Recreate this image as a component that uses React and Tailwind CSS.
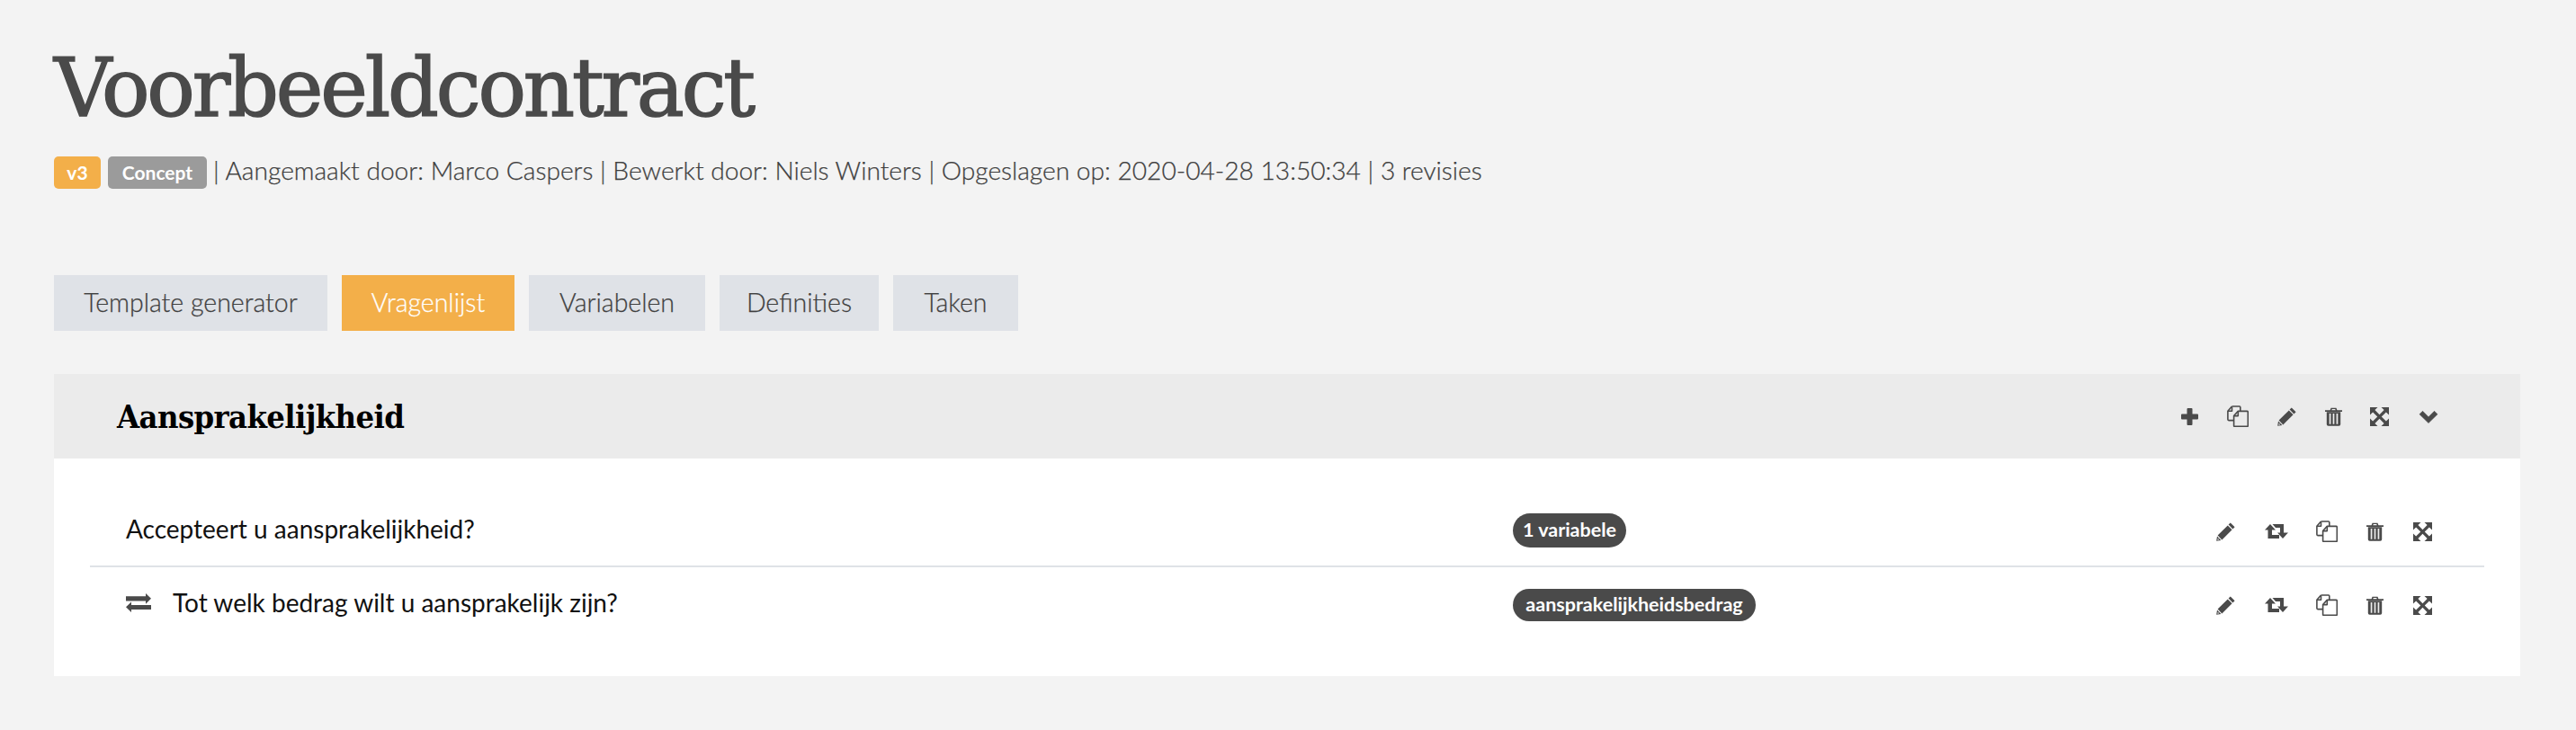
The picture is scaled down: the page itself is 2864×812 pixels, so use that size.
const sans = "font-['Lato','Noto_Sans',sans-serif]";
const slab = "font-['DejaVu_Serif','DejaVu_Serif_Condensed',serif]";
const slabBold = "font-['DejaVu_Serif_Condensed','DejaVu_Serif',serif]";

function I({ w = 24, h = 24, children, vb = "0 0 24 24" }) {
  return <svg width={w} height={h} viewBox={vb} className="block text-[#4a4a4a]">{children}</svg>;
}
const Plus = () => (
  <I w={19} h={19} vb="0 0 19 19">
    <path d="M6.500 1q0-1 1-1h4q1 0 1 1v5.500H18q1 0 1 1v4q0 1-1 1h-5.500V18q0 1-1 1h-4q-1 0-1-1v-5.500H1q-1 0-1-1v-4q0-1 1-1h5.500z" fill="currentColor" />
  </I>
);
const Copy = () => (
  <I>
    <g fill="none" stroke="currentColor" strokeWidth="1.6" strokeLinejoin="round">
      <path d="M5.500 1h8.300a1 1 0 0 1 1 1v4.200" />
      <path d="M5.500 1 .9 6.300v9.300a1 1 0 0 0 1 1h5.700" />
      <path d="M5.500 1.500v4.800H1" />
      <path d="M12.300 6.400h10a1 1 0 0 1 1 1v15a1 1 0 0 1-1 1H8.600a1 1 0 0 1-1-1V11.500z" />
      <path d="M12.300 6.700v4.900H7.900" />
    </g>
  </I>
);
const Pencil = () => (
  <I w={21} h={21} vb="0 0 21 21">
    <path d="M15.800 .4 20.600 5.200 18.400 7.400 13.600 2.600zM12.800 3.400 17.600 8.200 6.400 19.400 1.600 14.600z" fill="currentColor" />
    <path d="M1 15.600 5.400 20 .2 20.800z" fill="currentColor" />
    <path d="M1.800 17.800 3.200 19.200 1.400 19.700z" fill="#fff" />
  </I>
);
const Trash = () => (
  <I w={19} h={21} vb="0 0 19 21">
    <path d="M0 3.200h19v1.700H0zM5.500 3.400l1-2.700h6l1 2.700h-1.700l-.6-1.300H7.800l-.6 1.300z" fill="currentColor" />
    <path d="M1.800 5.200h15.400v13.800q0 1.800-1.800 1.800H3.600q-1.800 0-1.800-1.800z" fill="currentColor" />
    <path d="M4.700 7h1.700v11.800H4.700zM8.650 7h1.700v11.800h-1.700zM12.600 7h1.700v11.800h-1.700z" fill="#fff" fillOpacity=".9" />
  </I>
);
const Expand = () => (
  <I w={21} h={21} vb="0 0 21 21">
    <path d="M0 0H8.500L5.380 3.120 10.500 8.240 15.620 3.120 12.500 0H21V8.500L17.880 5.380 12.760 10.500 17.880 15.620 21 12.500V21H12.500L15.620 17.880 10.500 12.760 5.380 17.880 8.500 21H0V12.500L3.120 15.620 8.240 10.500 3.120 5.380 0 8.500Z" fill="currentColor" />
  </I>
);
const Chevron = () => (
  <I w={22} h={15} vb="0 0 22 15">
    <path d="M1 4.800 4.500 1.300 11 7.800l6.500-6.500L21 4.800 11 14.500z" fill="currentColor" stroke="currentColor" strokeWidth=".6" strokeLinejoin="round" />
  </I>
);
const Retweet = () => (
  <I w={26} h={16} vb="0 0 26 16">
    <path d="M6 0 12 6.500H8V12H16V16H3.500V6.500H0zM8.500 0H21V9.500H26L20 16 14 9.500H17V4H12z" fill="currentColor" />
  </I>
);
const Transfer = () => (
  <I w={28} h={21} vb="0 0 28 21">
    <path d="M0 3.300H22V0L28 5.800 22 11.700V8.600H0zM28 12.900H6V9.500L0 15.300 6 21V18H28z" fill="currentColor" />
  </I>
);

const IconBox = ({ className, children }) => (
  <span className={"flex items-center justify-center " + className}>{children}</span>
);

function Pill({ children, className }) {
  return (
    <span className={"inline-flex items-center justify-center rounded-full bg-[#4a4a4a] text-[21.500px] leading-none font-bold text-white " + className}>
      {children}
    </span>
  );
}

function RowIcons() {
  return (
    <div className="flex items-center">
      <IconBox className="w-[54px]"><Pencil /></IconBox>
      <IconBox className="w-[60px]"><Retweet /></IconBox>
      <IconBox className="w-[52px]"><Copy /></IconBox>
      <IconBox className="w-[54px]"><Trash /></IconBox>
      <IconBox className="w-[52px]"><Expand /></IconBox>
    </div>
  );
}

function Tab({ children, active, className }) {
  return (
    <div
      className={
        "flex h-[62px] items-center justify-center pb-[2px] text-[28.500px] font-light [-webkit-text-stroke:0.25px_currentColor] " +
        (active ? "bg-[#f3af49] text-white " : "bg-[#dfe2e7] text-[#3f3f3f] ") +
        className
      }
    >
      {children}
    </div>
  );
}

export default function App() {
  return (
    <div className={"min-h-[812px] bg-[#f3f3f3] pl-[60px] pr-[62px] pt-[45px] text-[#4a4a4a] " + sans}>
      <h1 className={"text-[89px] leading-[106px] font-normal tracking-[-3.200px] text-[#4a4a4a] [-webkit-text-stroke:1.5px_#4a4a4a] " + slab}>
        Voorbeeldcontract
      </h1>
      <div className="mt-[23px] flex h-[36px] items-center text-[28.150px] font-light whitespace-pre text-[#3f3f3f]">
        <span className="flex h-[36px] w-[52px] items-center justify-center rounded-[5px] bg-[#f3af49] text-[21px] font-bold text-white">v3</span>
        <span className="ml-2 mr-[7px] flex h-[36px] w-[110px] items-center justify-center rounded-[5px] bg-[#9b9b9b] text-[21px] font-bold text-white">Concept</span>
        <span className="-translate-y-[3px] [-webkit-text-stroke:0.25px_currentColor]">| Aangemaakt door: Marco Caspers | Bewerkt door: Niels Winters | Opgeslagen op: 2020-04-28 13:50:34 | 3 revisies</span>
      </div>
      <div className="mt-[96px] flex gap-4">
        <Tab className="w-[304px]">Template generator</Tab>
        <Tab active className="w-[192px]">Vragenlijst</Tab>
        <Tab className="w-[196px]">Variabelen</Tab>
        <Tab className="w-[177px]">Definities</Tab>
        <Tab className="w-[139px]">Taken</Tab>
      </div>
      <section className="mt-[48px] bg-white">
        <header className="flex h-[94px] items-center justify-between bg-[#ebebeb] pl-[70px] pr-[73px]">
          <h2 className={"text-[36px] font-bold tracking-[-0.6px] text-black " + slabBold}>Aansprakelijkheid</h2>
          <div className="flex items-center">
            <IconBox className="w-[54px]"><Plus /></IconBox>
            <IconBox className="w-[54px]"><Copy /></IconBox>
            <IconBox className="w-[54px]"><Pencil /></IconBox>
            <IconBox className="w-[50px]"><Trash /></IconBox>
            <IconBox className="w-[52px]"><Expand /></IconBox>
            <IconBox className="w-[58px]"><Chevron /></IconBox>
          </div>
        </header>
        <div className="px-[40px] pb-[39px] pt-[40px]">
          <div className="flex h-[81px] items-center border-b-2 border-[#dfe2e7]">
            <div className="w-[1582px] pb-[4px] pl-[40px] text-[28px] text-[#111]">Accepteert u aansprakelijkheid?</div>
            <div className="flex-1"><Pill className="h-[38px] w-[126px]">1 variabele</Pill></div>
            <div className="pr-[43px] pt-[3px]"><RowIcons /></div>
          </div>
          <div className="flex h-[82px] items-center">
            <div className="flex w-[1582px] items-center gap-[24px] pb-[4px] pl-[40px] text-[28px] text-[#111]">
              <Transfer />
              <span>Tot welk bedrag wilt u aansprakelijk zijn?</span>
            </div>
            <div className="flex-1 pt-[2px]"><Pill className="h-[36px] w-[270px]">aansprakelijkheidsbedrag</Pill></div>
            <div className="pr-[43px] pt-[2px]"><RowIcons /></div>
          </div>
        </div>
      </section>
    </div>
  );
}
